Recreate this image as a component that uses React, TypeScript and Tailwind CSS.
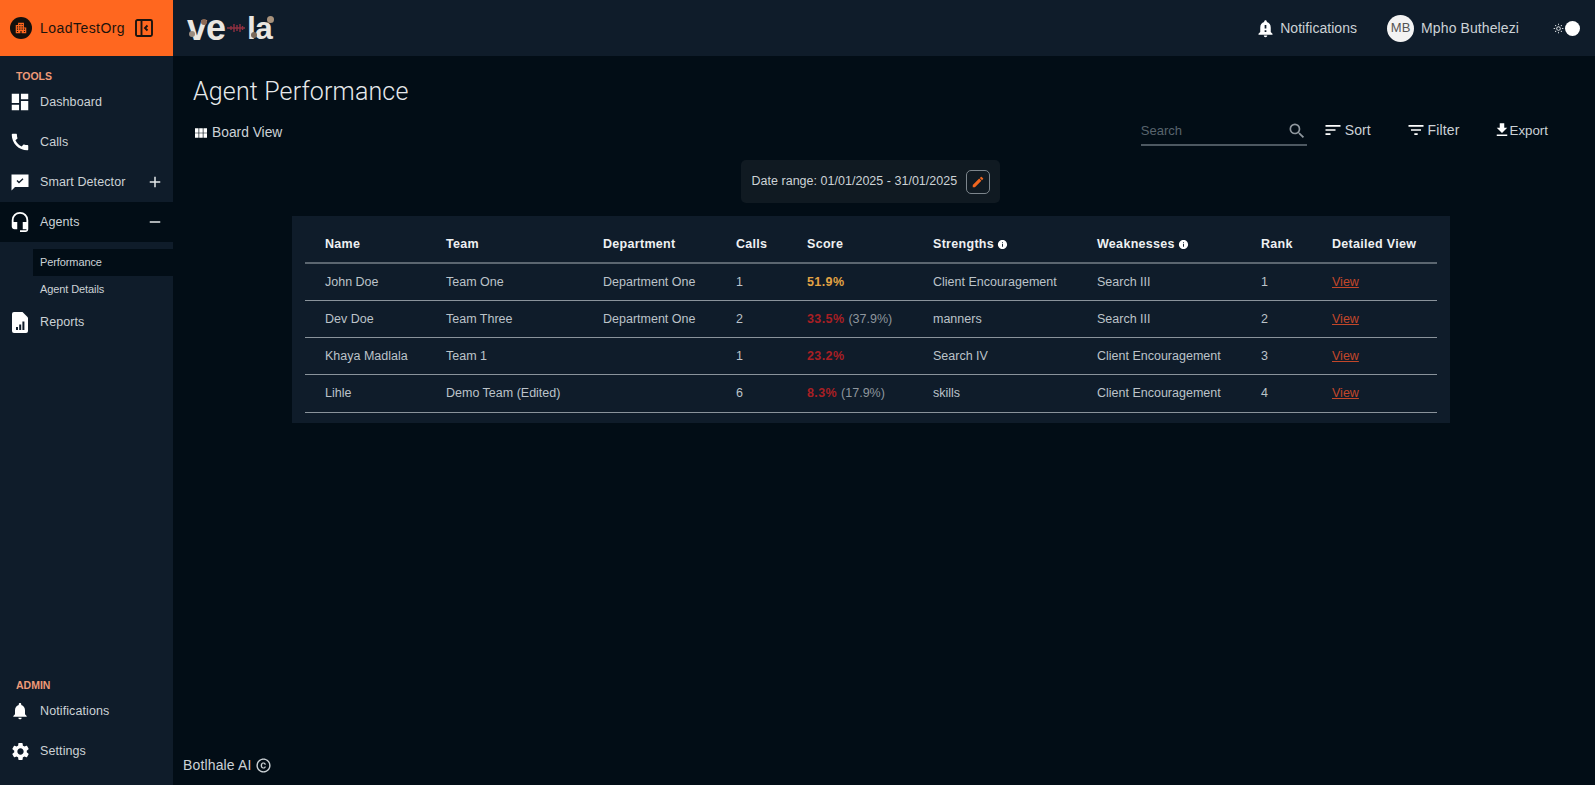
import React from "react";
import {
  MdDashboard, MdCall, MdHeadsetMic, MdNotifications, MdSettings, MdAdd, MdRemove,
  MdNotificationImportant, MdSearch, MdSort, MdFilterList, MdFileDownload, MdViewModule,
  MdEdit, MdInfo, MdApartment, MdOutlineLightMode, MdCopyright,
} from "react-icons/md";

function ChatCheck() {
  return (
    <svg viewBox="0 0 18 17" className="w-[18px] h-[17px]" fill="none">
      <path d="M0.5 0.5H17.5V13H4L0.5 16.5Z" fill="#fff" />
      <path d="M6 6.6L8 8.6L12 4.8" stroke="#0f1c2a" strokeWidth="1.4" />
    </svg>
  );
}

function ReportIcon() {
  return (
    <svg viewBox="0 0 16 21" className="w-[16px] h-[21px]">
      <path d="M2 0H10.5L16 5.5V19A2 2 0 0 1 14 21H2A2 2 0 0 1 0 19V2A2 2 0 0 1 2 0Z" fill="#fff" />
      <path d="M4 15H6V18H4ZM7.2 12.5H9.2V18H7.2ZM10.4 9.5H12.4V18H10.4Z" fill="#0f1c2a" />
    </svg>
  );
}

function CollapseIcon() {
  return (
    <svg viewBox="0 0 18 18" className="w-[18px] h-[18px]" fill="none">
      <rect x="1" y="1" width="16" height="16" rx="1.5" stroke="#1a1410" strokeWidth="1.9" />
      <path d="M6.5 1V17" stroke="#1a1410" strokeWidth="1.9" />
      <path d="M12.5 6.5L10 9L12.5 11.5" stroke="#1a1410" strokeWidth="1.9" />
    </svg>
  );
}

function Logo() {
  return (
    <div className="relative flex items-center h-[30px] w-[88px] text-[#e9e6e1] font-bold text-[36px] leading-none tracking-[-1px]">
      <span>ve</span>
      <svg viewBox="0 0 20 12" className="w-[20px] h-[12px] mx-[1px] shrink-0" stroke="#8f3040" strokeWidth="1.4">
        <path d="M1 6H19M5 4V8M8 2V10M11 3V9M14 2V10M16.5 4V8" />
      </svg>
      <span className="text-[32px]">la</span>
      <span className="absolute left-[14px] top-[6px] w-[6px] h-[6px] rounded-full bg-[#8d6a55]" />
      <span className="absolute left-[2px] top-[18px] w-[6px] h-[6px] rounded-full bg-[#9a8c80]" />
      <span className="absolute left-[80px] top-[3px] w-[7px] h-[7px] rounded-full bg-[#a8927c]" />
      <span className="absolute left-[64px] top-[19px] w-[6px] h-[6px] rounded-full bg-[#7c6a5a]" />
    </div>
  );
}

function NavRow({ icon, label, sign, active }: { icon: React.ReactNode; label: string; sign?: "plus" | "minus"; active?: boolean }) {
  return (
    <div className={`flex items-center h-[40px] pl-[11px] pr-[9px] ${active ? "bg-[#020d16]" : ""}`}>
      <span className="w-[18px] h-[24px] flex items-center justify-center text-white shrink-0">{icon}</span>
      <span className="ml-[11px] pt-[1px] text-[12.5px] tracking-[0.1px] text-[#ccd2d6] flex-1">{label}</span>
      {sign === "plus" && <MdAdd className="text-[#e4e7e9] w-[18px] h-[18px]" />}
      {sign === "minus" && <MdRemove className="text-[#e4e7e9] w-[18px] h-[18px]" />}
    </div>
  );
}

const rows = [
  { name: "John Doe", team: "Team One", dept: "Department One", calls: "1", score: "51.9%", color: "text-[#e3a344]", extra: "", s: "Client Encouragement", w: "Search III", rank: "1" },
  { name: "Dev Doe", team: "Team Three", dept: "Department One", calls: "2", score: "33.5%", color: "text-[#a81f24]", extra: "(37.9%)", s: "manners", w: "Search III", rank: "2" },
  { name: "Khaya Madlala", team: "Team 1", dept: "", calls: "1", score: "23.2%", color: "text-[#a81f24]", extra: "", s: "Search IV", w: "Client Encouragement", rank: "3" },
  { name: "Lihle", team: "Demo Team (Edited)", dept: "", calls: "6", score: "8.3%", color: "text-[#a81f24]", extra: "(17.9%)", s: "skills", w: "Client Encouragement", rank: "4" },
];

const th = "text-left font-bold text-[12.5px] tracking-[0.3px] text-[#eef0f2] pl-[20px] h-[47px] pt-[11px] border-b-2 border-[#5b6670]";
const td = "pl-[20px] text-[12.5px] text-[#bcc3c9] h-[37.25px] border-b border-[#8a939b]";

export default function App() {
  return (
    <div className="flex w-full h-screen overflow-hidden bg-[#020d16] font-['Liberation_Sans',Arial,sans-serif]">
      <aside className="w-[173px] shrink-0 flex flex-col bg-[#0f1c2a]">
        <div className="h-[56px] bg-[#ff671f] flex items-center pl-[10px]">
          <span className="w-[22px] h-[22px] rounded-full bg-[#14100d] flex items-center justify-center shrink-0">
            <MdApartment className="w-[14px] h-[14px] text-[#ff671f]" />
          </span>
          <span className="ml-[8px] text-[14px] tracking-[0.45px] text-[#1d130c]">LoadTestOrg</span>
          <span className="ml-[10px] flex"><CollapseIcon /></span>
        </div>
        <div className="pt-[14px] pl-[16px] h-[26px] text-[10.5px] leading-[12px] font-bold text-[#ee9a78]">TOOLS</div>
        <NavRow icon={<MdDashboard className="w-[22px] h-[22px] shrink-0" />} label="Dashboard" />
        <NavRow icon={<MdCall className="w-[22px] h-[22px] shrink-0" />} label="Calls" />
        <NavRow icon={<ChatCheck />} label="Smart Detector" sign="plus" />
        <NavRow icon={<MdHeadsetMic className="w-[22px] h-[22px] shrink-0" />} label="Agents" sign="minus" active />
        <div className="pt-[7px] pl-[33px]">
          <div className="h-[27px] flex items-center pl-[7px] bg-[#020d16] text-[11px] tracking-[-0.1px] text-[#ccd2d6]">Performance</div>
          <div className="h-[26px] flex items-center pl-[7px] text-[11px] tracking-[-0.1px] text-[#ccd2d6]">Agent Details</div>
        </div>
        <NavRow icon={<ReportIcon />} label="Reports" />
        <div className="mt-auto pb-[14px]">
          <div className="pl-[16px] h-[12px] text-[10.5px] leading-[12px] font-bold text-[#ee9a78]">ADMIN</div>
          <NavRow icon={<MdNotifications className="w-[20px] h-[20px] shrink-0" />} label="Notifications" />
          <NavRow icon={<MdSettings className="w-[21px] h-[21px] shrink-0" />} label="Settings" />
        </div>
      </aside>

      <div className="flex-1 min-w-0 flex flex-col">
        <header className="h-[56px] bg-[#0f1c2a] flex items-center pl-[14px] pr-[15px]">
          <Logo />
          <div className="ml-auto flex items-center">
            <MdNotificationImportant className="w-[21px] h-[21px] text-white" />
            <span className="ml-[4px] text-[14px] tracking-[0.05px] text-[#ccd2d6]">Notifications</span>
            <span className="ml-[30px] w-[27px] h-[27px] rounded-full bg-[#f3f3f3] text-[#555] text-[13px] flex items-center justify-center">MB</span>
            <span className="ml-[7px] text-[14px] tracking-[0.1px] text-[#ccd2d6]">Mpho Buthelezi</span>
            <MdOutlineLightMode className="ml-[34px] w-[11px] h-[11px] text-[#d8dcdf]" />
            <span className="ml-[1px] w-[15px] h-[15px] rounded-full bg-white shrink-0" />
          </div>
        </header>

        <main className="flex-1 flex flex-col min-h-0">
          <h1 className="ml-[20px] mt-[20px] font-['Roboto',sans-serif] text-[25px] leading-[32px] font-light tracking-[0.15px] text-[#e6e9eb]">Agent Performance</h1>

          <div className="mt-[9px] h-[36px] flex items-start">
            <div className="ml-[20px] mt-[6px] flex items-center h-[20px]">
              <MdViewModule className="w-[16px] h-[16px] text-white" />
              <span className="ml-[3px] text-[13.8px] text-[#ccd2d6]">Board View</span>
            </div>
            <div className="ml-auto flex items-start">
              <div className="w-[166px] h-[30px] border-b-2 border-[#4d5861] flex items-start justify-between -mt-[1px]">
                <span className="mt-[5px] text-[13px] text-[#59646d]">Search</span>
                <MdSearch className="mt-[5px] w-[20px] h-[20px] text-[#8f979e]" />
              </div>
              <div className="ml-[16px] flex items-center h-[20px] mt-[3px]">
                <MdSort className="w-[20px] h-[20px] text-white" />
                <span className="ml-[2px] text-[14px] text-[#ccd2d6]">Sort</span>
              </div>
              <div className="ml-[35px] flex items-center h-[20px] mt-[3px]">
                <MdFilterList className="w-[20px] h-[20px] text-white" />
                <span className="ml-[2px] text-[14px] tracking-[0.15px] text-[#ccd2d6]">Filter</span>
              </div>
              <div className="ml-[33px] mr-[47px] flex items-center h-[20px] mt-[3px]">
                <MdFileDownload className="w-[18px] h-[18px] text-white" />
                <span className="-ml-[1px] pt-[1px] text-[13.3px] text-[#ccd2d6]">Export</span>
              </div>
            </div>
          </div>

          <div className="flex justify-center pr-[28px]">
            <div className="w-[259px] h-[43px] mt-[7px] rounded-[5px] bg-[#101a22] flex items-center pl-[11px]">
              <span className="text-[12.5px] tracking-[0.02px] text-[#ccd2d6]">Date range: 01/01/2025 - 31/01/2025</span>
              <span className="ml-auto mr-[10px] w-[24px] h-[24px] rounded-[5px] border border-[#7c858c] flex items-center justify-center">
                <MdEdit className="w-[14px] h-[14px] text-[#f0661f]" />
              </span>
            </div>
          </div>

          <div className="mt-[13px] ml-[119px] w-[1158px] bg-[#0f1c2a] px-[13px] pb-[10px]">
            <table className="table-fixed w-[1132px] border-collapse">
              <thead>
                <tr>
                  <th className={`${th} w-[121px]`}>Name</th>
                  <th className={`${th} w-[157px]`}>Team</th>
                  <th className={`${th} w-[133px]`}>Department</th>
                  <th className={`${th} w-[71px]`}>Calls</th>
                  <th className={`${th} w-[126px]`}>Score</th>
                  <th className={`${th} w-[164px]`}>
                    <span className="inline-flex items-center">Strengths<MdInfo className="ml-[3px] w-[11px] h-[11px] text-white" /></span>
                  </th>
                  <th className={`${th} w-[164px]`}>
                    <span className="inline-flex items-center">Weaknesses<MdInfo className="ml-[3px] w-[11px] h-[11px] text-white" /></span>
                  </th>
                  <th className={`${th} w-[71px]`}>Rank</th>
                  <th className={`${th} w-[125px]`}>Detailed View</th>
                </tr>
              </thead>
              <tbody>
                {rows.map((r) => (
                  <tr key={r.name}>
                    <td className={td}>{r.name}</td>
                    <td className={td}>{r.team}</td>
                    <td className={td}>{r.dept}</td>
                    <td className={td}>{r.calls}</td>
                    <td className={td}>
                      <span className={`font-bold tracking-[0.4px] ${r.color}`}>{r.score}</span>
                      {r.extra && <span className="ml-[4px] text-[#8e969d]">{r.extra}</span>}
                    </td>
                    <td className={td}>{r.s}</td>
                    <td className={td}>{r.w}</td>
                    <td className={td}>{r.rank}</td>
                    <td className={td}><span className="underline text-[#c2472a]">View</span></td>
                  </tr>
                ))}
              </tbody>
            </table>
          </div>

          <div className="mt-auto ml-[10px] mb-[9px] flex items-center text-[14px] tracking-[0.15px] text-[#ccd2d6]">
            Botlhale AI
            <MdCopyright className="ml-[3px] w-[17px] h-[17px]" />
          </div>
        </main>
      </div>
    </div>
  );
}
